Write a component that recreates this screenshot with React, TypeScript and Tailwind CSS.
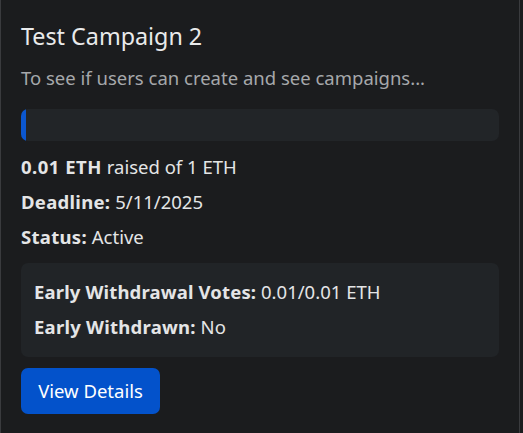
export default function App() {
  const rows = [
    { label: 'Deadline:', value: '5/11/2025' },
    { label: 'Status:', value: 'Active' },
  ]

  return (
    <div className="min-h-[433px] bg-[#1b1c1e] font-['Noto_Sans',sans-serif] text-[#e4e5e6]">
      <div className="w-[520px] min-h-[433px] border-x border-[#3a3b3e] px-[20px] pt-[21px]">
        <h5 className="text-[23.3px] leading-[30px] text-[#e9eaeb]">Test Campaign 2</h5>
        <p className="mt-[14px] text-[18.5px] leading-[25px] text-[#a6a8ab]">
          To see if users can create and see campaigns...
        </p>

        <div className="mt-[19px] h-[32px] rounded-[7px] bg-[#222528] overflow-hidden">
          <div className="h-full bg-[#0b57d0]" style={{ width: '1%' }} />
        </div>

        <div className="mt-[13px] flex flex-col gap-[9px] text-[18.5px] leading-[26px]">
          <p>
            <span className="font-bold tracking-[0.5px]">0.01 ETH</span> raised of 1 ETH
          </p>
          {rows.map(r => (
            <p key={r.label}>
              <span className="font-bold tracking-[0.3px]">{r.label}</span> {r.value}
            </p>
          ))}
        </div>

        <div className="mt-[13px] rounded-[7px] bg-[#212427] px-[13px] pt-[16px] pb-[17px] flex flex-col gap-[9px] text-[18.5px] leading-[26px]">
          <p>
            <span className="font-bold tracking-[0.15px]">Early Withdrawal Votes:</span> 0.01/0.01 ETH
          </p>
          <p>
            <span className="font-bold tracking-[0.25px]">Early Withdrawn:</span> No
          </p>
        </div>

        <button className="mt-[11px] h-[46px] w-[139px] rounded-[7px] bg-[#0352cb] text-[18.5px] text-white">
          View Details
        </button>
      </div>
    </div>
  )
}
